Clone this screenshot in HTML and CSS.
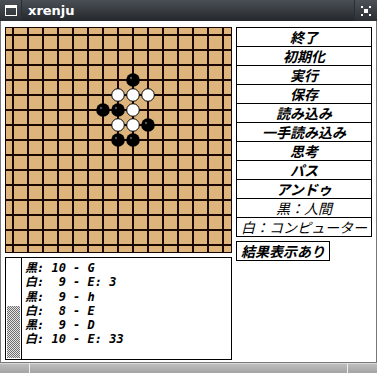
FILE: index.html
```html
<!DOCTYPE html>
<html lang="ja">
<head>
    <meta charset="UTF-8">
    <title>xrenju</title>
    <link rel="stylesheet" href="styles.css">
</head>
<body>
    <div class="window">
        <div class="titlebar">
            <div class="tb-box">
                <svg width="12" height="11" viewBox="0 0 12 11">
                    <rect x="0.5" y="0.5" width="11" height="10" fill="none" stroke="#fff"/>
                    <rect x="0" y="0" width="12" height="3" fill="#fff"/>
                </svg>
            </div>
            <div class="tb-title">xrenju</div>
            <div class="tb-box tb-right">
                <svg width="10" height="10" viewBox="0 0 10 10">
                    <rect x="0" y="0" width="2" height="2" fill="#fff"/>
                    <rect x="8" y="0" width="2" height="2" fill="#fff"/>
                    <rect x="0" y="8" width="2" height="2" fill="#fff"/>
                    <rect x="8" y="8" width="2" height="2" fill="#fff"/>
                    <rect x="3" y="3" width="4" height="4" fill="#fff"/>
                </svg>
            </div>
        </div>
        <div class="main">
            <div class="left">
                <div class="board">
                    <svg id="board" width="227" height="226" viewBox="0 0 227 226"></svg>
                </div>
                <div class="log">
                    <div class="scroll"><div class="thumb"></div></div>
                    <div class="log-text">黒: 10 - G
白:  9 - E: 3
黒:  9 - h
白:  8 - E
黒:  9 - D
白: 10 - E: 33</div>
                </div>
            </div>
            <div class="right">
                <div class="buttons">
                    <div class="btn">終了</div>
                    <div class="btn">初期化</div>
                    <div class="btn">実行</div>
                    <div class="btn">保存</div>
                    <div class="btn">読み込み</div>
                    <div class="btn">一手読み込み</div>
                    <div class="btn">思考</div>
                    <div class="btn">パス</div>
                    <div class="btn">アンドゥ</div>
                    <div class="btn light">黒：人間</div>
                    <div class="btn light">白：コンピューター</div>
                </div>
                <div class="result">結果表示あり</div>
            </div>
        </div>
        <div class="statusbar">
            <div class="seg seg-a"></div>
            <div class="seg seg-b"></div>
            <div class="seg seg-c"></div>
        </div>
    </div>
    <script>
        const stones = [
            [8, 3, "b"],
            [7, 4, "w"], [8, 4, "w"], [9, 4, "w"],
            [6, 5, "b"], [7, 5, "b"], [8, 5, "w"],
            [7, 6, "w"], [8, 6, "w"], [9, 6, "b"],
            [7, 7, "b"], [8, 7, "b"]
        ];

        function drawBoard() {
            const svg = document.getElementById("board");
            let html = '<rect x="0.5" y="0.5" width="226" height="225" fill="#dcb47c" stroke="#1a0800"/>';
            for (let i = 0; i < 15; i++) {
                const p = 8 + i * 15;
                html += `<rect x="${p - 1}" y="0" width="2" height="226" fill="#1a0800"/>`;
                html += `<rect x="0" y="${p - 1}" width="227" height="2" fill="#1a0800"/>`;
            }
            stones.forEach(function (s) {
                const cx = 8 + s[0] * 15;
                const cy = 8 + s[1] * 15;
                if (s[2] === "b") {
                    html += `<circle cx="${cx}" cy="${cy}" r="6.8" fill="#000"/>`;
                    html += `<circle cx="${cx - 2}" cy="${cy - 2}" r="1.2" fill="#555"/>`;
                } else {
                    html += `<circle cx="${cx}" cy="${cy}" r="6.3" fill="#fff" stroke="#000" stroke-width="1"/>`;
                }
            });
            svg.innerHTML = html;
        }

        drawBoard();
    </script>
</body>
</html>
```
FILE: styles.css
```css
body {
    margin: 0;
    padding: 0;
    background: #fff;
    font-family: "Noto Sans CJK JP", "DejaVu Sans", sans-serif;
}
.window {
    width: 377px;
    height: 373px;
    display: flex;
    flex-direction: column;
    overflow: hidden;
}
.titlebar {
    height: 21px;
    display: flex;
    background: #2a2e33;
    gap: 1px;
}
.tb-box {
    width: 21px;
    height: 21px;
    display: flex;
    align-items: center;
    justify-content: center;
    background: linear-gradient(#4c5157, #2b2f34);
}
.tb-right {
    width: 22px;
}
.tb-title {
    flex: 1;
    background: linear-gradient(#4a4f55, #24282c);
    color: #fff;
    font-family: "DejaVu Sans", sans-serif;
    font-weight: bold;
    font-size: 13px;
    line-height: 21px;
    padding-left: 6px;
}
.main {
    flex: 1;
    display: flex;
    gap: 4px;
    padding: 6px 0 0 4px;
    border-left: 1px solid #777;
    border-right: 1px solid #777;
}
.left {
    display: flex;
    flex-direction: column;
    gap: 4px;
    width: 227px;
}
.board {
    height: 226px;
    line-height: 0;
}
.log {
    height: 103px;
    border: 1px solid #000;
    box-sizing: border-box;
    display: flex;
}
.scroll {
    width: 14px;
    border-right: 1px solid #000;
    display: flex;
    flex-direction: column;
    justify-content: flex-end;
    padding: 0 0 1px 1px;
}
.thumb {
    height: 52px;
    width: 13px;
    background: repeating-conic-gradient(#6e6e6e 0 25%, #e4e4e4 0 50%) 0 0 / 2px 2px;
}
.log-text {
    white-space: pre;
    font-family: "DejaVu Sans Mono", "Noto Sans CJK JP", monospace;
    font-size: 12px;
    font-style: italic;
    font-weight: bold;
    line-height: 14.3px;
    padding: 3px 0 0 3px;
    color: #000;
}
.right {
    width: 136px;
    display: flex;
    flex-direction: column;
    gap: 4px;
}
.buttons {
    border: 1px solid #000;
}
.btn {
    height: 18px;
    line-height: 18px;
    border-bottom: 1px solid #000;
    text-align: center;
    font-size: 14px;
    font-weight: bold;
    font-style: italic;
    color: #000;
}
.btn:last-child {
    border-bottom: none;
}
.btn.light {
    font-weight: normal;
}
.result {
    width: 92px;
    height: 18px;
    line-height: 18px;
    border: 1px solid #000;
    text-align: center;
    font-size: 14px;
    font-weight: bold;
    font-style: italic;
}
.statusbar {
    height: 10px;
    display: flex;
    border-top: 1px solid #7a7a7a;
    background: #b3b3b3;
}
.seg {
    border-top: 1px solid #d8d8d8;
    background: linear-gradient(#bdbdbd, #a4a4a4);
}
.seg-a {
    width: 29px;
    border-right: 1px solid #eee;
}
.seg-b {
    flex: 1;
    border-right: 1px solid #eee;
}
.seg-c {
    width: 29px;
}
```
